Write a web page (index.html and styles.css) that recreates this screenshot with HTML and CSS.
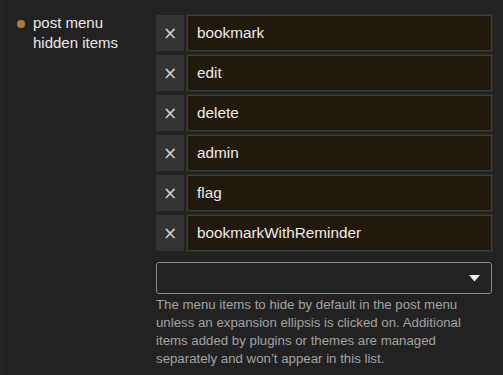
FILE: index.html
```html
<!DOCTYPE html>
<html>
<head>
<meta charset="utf-8">
<link rel="stylesheet" href="styles.css">
</head>
<body>
<div class="setting">
  <div class="setting-label">
    <span class="dot"></span>
    <h3>post menu<br>hidden items</h3>
  </div>
  <div class="setting-value">
    <ul class="values">
      <li class="value"><button class="remove">×</button><div class="input">bookmark</div></li>
      <li class="value"><button class="remove">×</button><div class="input">edit</div></li>
      <li class="value"><button class="remove">×</button><div class="input">delete</div></li>
      <li class="value"><button class="remove">×</button><div class="input">admin</div></li>
      <li class="value"><button class="remove">×</button><div class="input">flag</div></li>
      <li class="value"><button class="remove">×</button><div class="input">bookmarkWithReminder</div></li>
    </ul>
    <div class="select">
      <svg class="caret" width="11" height="7" viewBox="0 0 11 7"><path d="M0 0 H11 L5.5 6.5 Z" fill="#f2f2f2"/></svg>
    </div>
    <p class="desc">The menu items to hide by default in the post menu unless an expansion ellipsis is clicked on. Additional items added by plugins or themes are managed separately and won’t appear in this list.</p>
  </div>
</div>
</body>
</html>
```
FILE: styles.css
```css
html, body {
  margin: 0;
  background: #222222;
  font-family: "Liberation Sans", Arial, sans-serif;
  color: #e6e6e6;
}
body {
  height: 375px;
  overflow: hidden;
  border-left: 3px solid #262626;
  box-sizing: border-box;
}
.setting {
  display: flex;
  padding-top: 15px;
}
.setting-label {
  width: 153px;
  flex: none;
  display: flex;
  align-items: flex-start;
  padding-left: 14px;
  box-sizing: border-box;
}
.dot {
  width: 8px;
  height: 8px;
  border-radius: 50%;
  background: #b5783a;
  margin-top: 5px;
  margin-right: 8px;
  flex: none;
}
h3 {
  margin: -2px 0 0;
  font-size: 15px;
  font-weight: normal;
  line-height: 20px;
  color: #e9e9e9;
}
.setting-value {
  width: 336px;
}
.values {
  list-style: none;
  margin: 0;
  padding: 0;
  display: flex;
  flex-direction: column;
  gap: 4px;
}
.value {
  display: flex;
  gap: 3px;
  height: 36px;
}
.remove {
  width: 28px;
  flex: none;
  border: none;
  background: #333333;
  color: #d0d0d0;
  font-family: "DejaVu Sans", sans-serif;
  font-size: 17px;
  padding: 0;
  line-height: 1;
}
.input {
  flex: 1;
  background: #22190d;
  border: 1px solid #3e3e3e;
  box-shadow: 0 0 0 1px #2c2c2c;
  padding: 0 9px;
  display: flex;
  align-items: center;
  font-size: 15.3px;
  color: #ececec;
}
.select {
  margin-top: 11px;
  height: 32px;
  border: 1px solid #8a8a8a;
  border-radius: 3px;
  box-sizing: border-box;
  display: flex;
  align-items: center;
  justify-content: flex-end;
  padding-right: 11px;
  background: #232323;
}
.desc {
  margin: 2px 0 0;
  font-size: 13.25px;
  line-height: 18px;
  color: #a3a3a3;
}
```
